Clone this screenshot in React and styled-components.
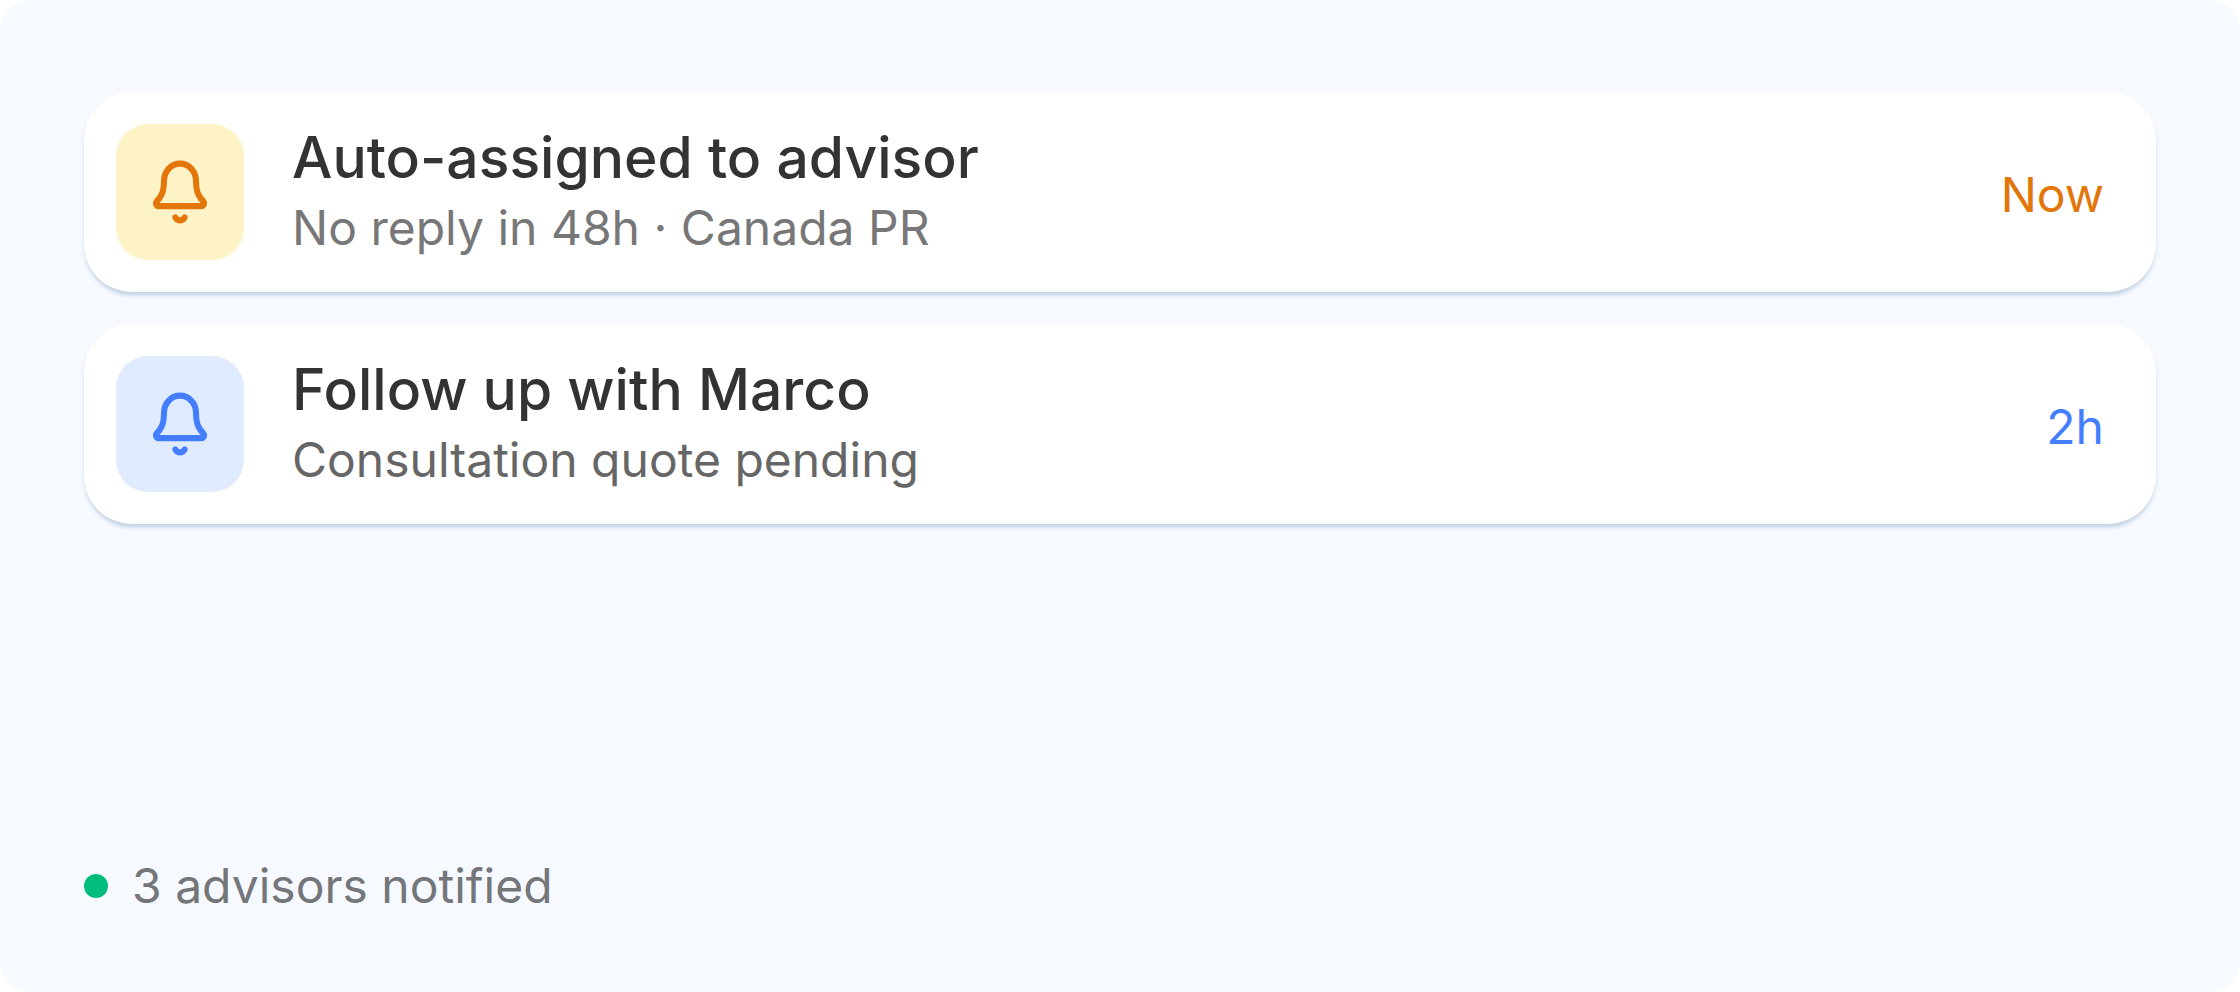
import styled, { createGlobalStyle } from 'styled-components'

const GlobalStyle = createGlobalStyle`
  *, *::before, *::after {
    box-sizing: border-box;
  }

  body {
    margin: 0;
    background: #fff;
    font-family: Inter, 'Liberation Sans', sans-serif;
  }
`

const TONES = {
  amber: { color: '#e27609', background: '#fef2c7' },
  blue: { color: '#447eff', background: '#e0ebff' },
}

const Panel = styled.main`
  min-height: 100vh;
  padding: 92px 84px 78px;
  display: flex;
  flex-direction: column;
  justify-content: space-between;
  gap: 48px;
  background: #f6f9ff;
  border-radius: 32px;
`

const List = styled.ul`
  margin: 0;
  padding: 0;
  list-style: none;
  display: flex;
  flex-direction: column;
  gap: 32px;
`

const Card = styled.li`
  padding: 32px 52px 32px 32px;
  display: flex;
  align-items: center;
  gap: 48px;
  background: #fff;
  border-radius: 48px;
  box-shadow: 0 4px 4px -1px rgba(40, 100, 140, 0.28);
`

const IconTile = styled.div`
  flex: none;
  width: 128px;
  height: 136px;
  display: grid;
  place-items: center;
  color: ${({ $tone }) => TONES[$tone].color};
  background: ${({ $tone }) => TONES[$tone].background};
  border-radius: 32px;
`

const Body = styled.div`
  flex: 1;
  min-width: 0;
  display: flex;
  flex-direction: column;
  gap: 4px;
`

const Title = styled.h3`
  margin: 0;
  color: #333;
  font-size: 57px;
  font-weight: 500;
  line-height: 68px;
`

const Detail = styled.p`
  margin: 0;
  color: ${({ $strong }) => ($strong ? '#666' : '#777')};
  font-size: 48px;
  line-height: 64px;
`

const Time = styled.span`
  padding-top: 6px;
  color: ${({ $tone }) => TONES[$tone].color};
  font-size: 48px;
  line-height: 64px;
`

const Footer = styled.footer`
  display: flex;
  align-items: center;
  gap: 24px;
  color: #747679;
  font-size: 48px;
  line-height: 56px;
`

const Dot = styled.span`
  flex: none;
  width: 24px;
  height: 24px;
  background: #00bc7d;
  border-radius: 50%;
`

function BellIcon() {
  return (
    <svg
      width="64"
      height="68"
      viewBox="0 0 24 24"
      preserveAspectRatio="none"
      fill="none"
      stroke="currentColor"
      strokeWidth="2.25"
      strokeLinecap="round"
      strokeLinejoin="round"
      aria-hidden="true"
    >
      <path d="M10.268 21a2 2 0 0 0 3.464 0" />
      <path d="M3.262 15.326A1 1 0 0 0 4 17h16a1 1 0 0 0 .74-1.673C19.41 13.956 18 12.499 18 8A6 6 0 0 0 6 8c0 4.499-1.411 5.956-2.738 7.326" />
    </svg>
  )
}

const reminders = [
  { id: 1, tone: 'amber', title: 'Auto-assigned to advisor', detail: 'No reply in 48h · Canada PR', time: 'Now' },
  { id: 2, tone: 'blue', title: 'Follow up with Marco', detail: 'Consultation quote pending', time: '2h', strong: true },
]

function Reminder({ reminder }) {
  return (
    <Card>
      <IconTile $tone={reminder.tone}>
        <BellIcon />
      </IconTile>
      <Body>
        <Title>{reminder.title}</Title>
        <Detail $strong={reminder.strong}>{reminder.detail}</Detail>
      </Body>
      <Time $tone={reminder.tone}>{reminder.time}</Time>
    </Card>
  )
}

function App() {
  return (
    <>
      <GlobalStyle />
      <Panel>
        <List>
          {reminders.map((reminder) => (
            <Reminder key={reminder.id} reminder={reminder} />
          ))}
        </List>
        <Footer>
          <Dot />
          3 advisors notified
        </Footer>
      </Panel>
    </>
  )
}

export default App
